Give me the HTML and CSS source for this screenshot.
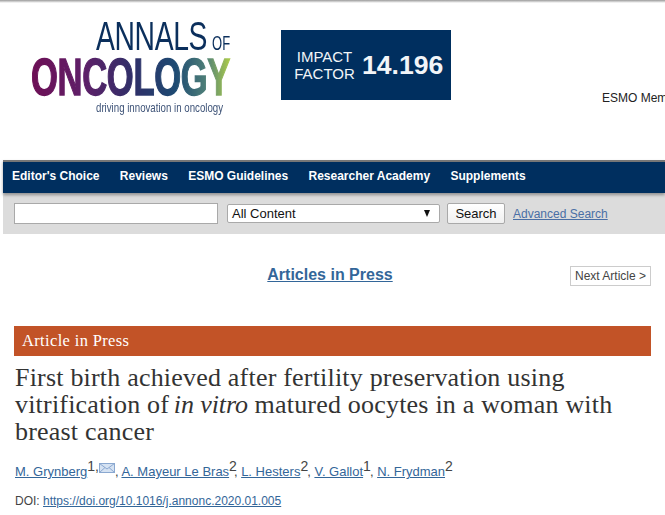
FILE: index.html
```html
<!DOCTYPE html>
<html lang="en">
<head>
<meta charset="utf-8">
<title>First birth achieved after fertility preservation</title>
<link rel="stylesheet" href="styles.css">
</head>
<body>
<div class="topshade"></div>
<header class="header">
  <div class="logo">
    <div class="logo-top"><span class="annals">ANNALS</span><span class="of">OF</span></div>
    <div class="oncology">ONCOLOGY</div>
    <div class="tagline">driving innovation in oncology</div>
  </div>
  <div class="impact">
    <div class="impact-label">IMPACT<br>FACTOR</div>
    <div class="impact-value">14.196</div>
  </div>
  <div class="member">ESMO Members</div>
</header>
<div class="navwrap">
  <nav class="nav">
    <a href="#">Editor's Choice</a>
    <a href="#">Reviews</a>
    <a href="#">ESMO Guidelines</a>
    <a href="#">Researcher Academy</a>
    <a href="#">Supplements</a>
  </nav>
  <form class="search">
    <input class="search-input" type="text">
    <div class="search-select"><span>All Content</span><span class="caret"></span></div>
    <button class="search-btn" type="button">Search</button>
    <a class="advanced" href="#">Advanced Search</a>
  </form>
</div>
<main class="main">
  <div class="pager">
    <a class="section-link" href="#">Articles in Press</a>
    <a class="next" href="#">Next Article &gt;</a>
  </div>
  <div class="banner">Article in Press</div>
  <h1 class="title">First birth achieved after fertility preservation using vitrification of <em>in vitro</em> matured oocytes in a woman with breast cancer</h1>
  <p class="authors"><a href="#">M. Grynberg</a><sup>1,</sup><svg class="mail" viewBox="0 0 16 10" width="16" height="10"><rect x="0.5" y="0.5" width="15" height="9" fill="#d5e2f2" stroke="#8aa8d0"/><path d="M0.5 0.5 L8 6 L15.5 0.5 M0.5 9.5 L6 4.5 M15.5 9.5 L10 4.5" fill="none" stroke="#8aa8d0"/></svg>, <a href="#">A. Mayeur Le Bras</a><sup class="tight-more">2</sup>, <a href="#">L. Hesters</a><sup class="tight">2</sup>, <a href="#">V. Gallot</a><sup class="tight">1</sup>, <a href="#">N. Frydman</a><sup>2</sup></p>
  <p class="doi">DOI: <a href="#">https://doi.org/10.1016/j.annonc.2020.01.005</a></p>
</main>
</body>
</html>
```
FILE: styles.css
```css
html, body { margin: 0; padding: 0; overflow: hidden; background: #fff; }
body { width: 665px; height: 515px; font-family: "Liberation Sans", Arial, sans-serif; color: #333; }
.topshade { height: 3px; background: linear-gradient(#9a9a9a, #e2e2e2 70%, #fff); }
.header { height: 157px; display: flex; align-items: flex-start; white-space: nowrap; }
.logo { width: 281px; flex: none; height: 115px; position: relative; }
.logo-top { position: absolute; left: 96px; top: 14px; display: flex; align-items: flex-end; color: #0b2f5c; line-height: 1; }
.annals { font-size: 41px; line-height: 38px; display: inline-block; width: 116px; transform: scaleX(0.69); transform-origin: left; letter-spacing: -0.5px; }
.of { font-size: 21px; line-height: 20px; margin-bottom: 2px; display: inline-block; transform: scaleX(0.62); transform-origin: left; }
.oncology { position: absolute; left: 31px; top: 49px; font-size: 52px; line-height: 50px; font-weight: 700; width: 310px; transform: scaleX(0.665); transform-origin: left; letter-spacing: -0.5px; -webkit-text-stroke: 1.4px transparent; background: linear-gradient(90deg, #6d0f55 0%, #5f1f68 25%, #2e2f68 50%, #1d4a72 70%, #4f8078 85%, #a8c84c 96%); -webkit-background-clip: text; background-clip: text; color: transparent; }
.tagline { position: absolute; left: 96px; top: 97px; font-size: 13px; line-height: 16px; color: #3f5478; transform: scaleX(0.745); transform-origin: left; }
.impact { width: 170px; height: 70px; flex: none; margin-top: 27px; background: #002f5f; color: #f2f5f8; display: flex; align-items: center; box-sizing: border-box; padding-left: 12px; }
.impact-label { font-size: 15px; line-height: 17px; text-align: center; width: 63px; }
.impact-value { font-size: 26.6px; font-weight: 700; margin-left: 6px; }
.member { font-size: 12px; color: #222; margin-left: 151px; margin-top: 88px; line-height: 14px; }
.navwrap { margin-left: 3px; }
.nav { height: 33px; background: #002f5f; border-top: 2px solid #777; box-sizing: border-box; box-shadow: 0 2px 3px rgba(0,0,0,.35); position: relative; display: flex; align-items: center; gap: 20.3px; padding: 0 0 3px 9px; }
.nav a { color: #fff; font-size: 12px; font-weight: 700; text-decoration: none; }
.search { height: 41px; background: #dcdcdc; display: flex; align-items: center; padding-left: 11px; box-sizing: border-box; }
.search-input { width: 204px; height: 21px; box-sizing: border-box; border: 1px solid #a9a9a9; background: #fff; margin: 0 9px 0 0; padding: 0; }
.search-select { width: 213px; height: 19px; box-sizing: border-box; border: 1px solid #a9a9a9; border-radius: 2px; background: #fff; margin-right: 7px; font-size: 13px; color: #111; display: flex; justify-content: space-between; align-items: center; padding: 0 9px 1px 4px; }
.caret { width: 0; height: 0; border-left: 3.5px solid transparent; border-right: 3.5px solid transparent; border-top: 7px solid #111; }
.search-btn { width: 58px; height: 21px; box-sizing: border-box; border: 1px solid #a9a9a9; border-radius: 2px; background: linear-gradient(#fff, #f0f0f0); font: 13px "Liberation Sans", Arial, sans-serif; color: #111; padding: 0 0 1px; margin: 0 8px 0 0; }
.advanced { font-size: 12px; color: #4a6fa5; }
.main { padding: 0 14px; }
.pager { height: 92px; display: flex; align-items: flex-start; position: relative; justify-content: center; box-sizing: border-box; padding-top: 32px; }
.section-link { font-size: 16px; font-weight: 700; color: #336699; line-height: 18px; margin-right: 5px; }
.next { position: absolute; right: 0; top: 32px; width: 81px; height: 20px; box-sizing: border-box; border: 1px solid #ccc; font-size: 12px; line-height: 18px; text-align: center; color: #444; text-decoration: none; }
.banner { height: 30px; background: #c25327; color: #fff; font: 16.5px/30px "Liberation Serif", serif; letter-spacing: 0.35px; padding-left: 8px; }
.title { font: 400 26px/27px "Liberation Serif", serif; color: #333; margin: 8px 0 0; padding-left: 1px; width: 615px; letter-spacing: 0.2px; }
.title em { font-style: italic; letter-spacing: -0.1px; margin-left: -2px; }
.authors { margin: 17px 0 0; padding-left: 1px; font-size: 13px; line-height: 20px; color: #444; white-space: nowrap; }
.authors a { color: #336699; }
.authors sup { font-size: 14px; line-height: 0; vertical-align: 5px; }
.authors .tight { margin-right: -1px; }
.authors .tight-more { margin-right: -3px; }
.mail { vertical-align: 3px; }
.doi { margin: 11px 0 0; padding-left: 1px; font-size: 12px; line-height: 16px; color: #444; }
.doi a { color: #336699; }
```
